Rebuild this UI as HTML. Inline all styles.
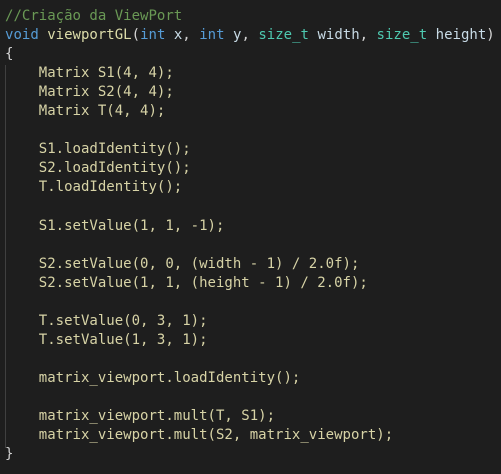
<!DOCTYPE html>
<html><head><style>
html,body{margin:0;padding:0;background:#1e1e1e;width:501px;height:474px;overflow:hidden}
pre{margin:0;position:absolute;left:5px;top:7px;font-family:"DejaVu Sans Mono","Liberation Mono",monospace;font-size:14.02px;line-height:19.04px;color:#d7d3a6}
.c{color:#6a9955}.k{color:#569cd6}.f{color:#dcdcaa}.t{color:#4ec9b0}.p{color:#c8dbe6}.w{color:#d4d4d4}
.g{position:absolute;left:5px;top:65px;width:1px;height:383px;background:#404040}
</style></head><body>
<div class="g"></div>
<pre><span class="c">//Criação da ViewPort</span>
<span class="k">void</span> <span class="f">viewportGL</span><span class="w">(</span><span class="k">int</span> <span class="p">x</span><span class="w">,</span> <span class="k">int</span> <span class="p">y</span><span class="w">,</span> <span class="t">size_t</span> <span class="p">width</span><span class="w">,</span> <span class="t">size_t</span> <span class="p">height</span><span class="w">)</span>
<span class="w">{</span>
    Matrix S1(4, 4);
    Matrix S2(4, 4);
    Matrix T(4, 4);

    S1.loadIdentity();
    S2.loadIdentity();
    T.loadIdentity();

    S1.setValue(1, 1, -1);

    S2.setValue(0, 0, (width - 1) / 2.0f);
    S2.setValue(1, 1, (height - 1) / 2.0f);

    T.setValue(0, 3, 1);
    T.setValue(1, 3, 1);

    matrix_viewport.loadIdentity();

    matrix_viewport.mult(T, S1);
    matrix_viewport.mult(S2, matrix_viewport);
<span class="w">}</span></pre>
</body></html>
